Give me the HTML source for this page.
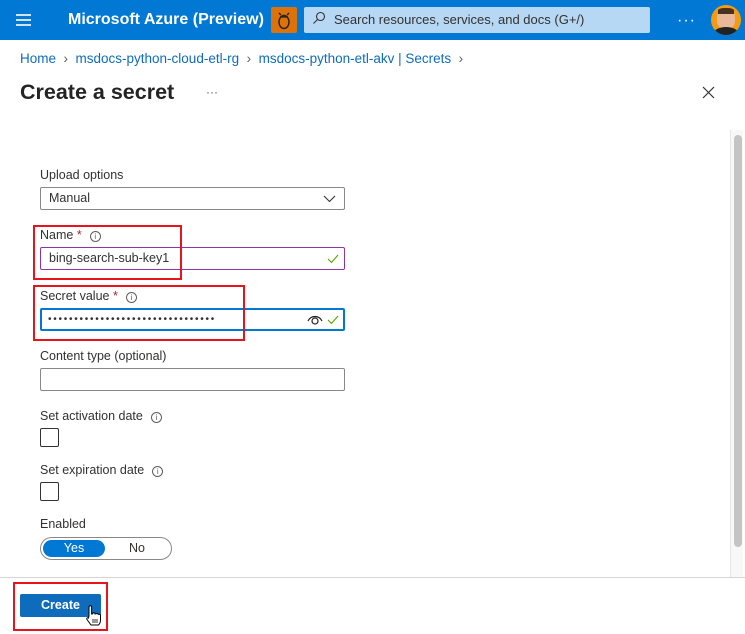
<!DOCTYPE html>
<html><head><style>
*{box-sizing:border-box;margin:0;padding:0}
body{width:745px;height:634px;overflow:hidden;background:#fff;font-family:"Liberation Sans",sans-serif;font-size:13px;color:#323130;position:relative}
.abs{position:absolute}
.top{left:0;top:0;width:745px;height:40px;background:#0078d4}
.lbl{position:absolute;left:40px;font-size:12.5px;color:#323130}
.inp{position:absolute;left:40px;width:305px;height:23px;border:1px solid #8a8886;border-radius:2px;font-size:12.5px;padding-left:8px;line-height:21px}
.red{position:absolute;border:2px solid #e8141b}
.info{display:inline-block;width:11px;height:11px;border:1px solid #605e5c;border-radius:50%;font-size:8px;text-align:center;line-height:9px;margin-left:8px;vertical-align:0px;color:#605e5c}
.chk{position:absolute;left:40px;width:19px;height:19px;border:1px solid #323130;border-radius:2px}
</style></head><body>
<div class="abs top"></div>
<div class="abs" style="left:16px;top:14px;width:15px;height:2px;background:#cfe4f7;box-shadow:0 5px 0 #cfe4f7,0 10px 0 #cfe4f7"></div>
<div class="abs" style="left:68px;top:11px;color:#fff;font-size:16px;font-weight:bold">Microsoft Azure (Preview)</div>
<div class="abs" style="left:271px;top:7px;width:26px;height:26px;background:#dd7209;border-radius:2px"><svg width="26" height="26"><ellipse cx="13" cy="15" rx="5" ry="6.5" fill="none" stroke="#222" stroke-width="1.4"/><path d="M10 8l-2-2M16 8l2-2M9 10h8" stroke="#222" stroke-width="1.3" fill="none"/></svg></div>
<div class="abs" style="left:304px;top:7px;width:346px;height:26px;background:#b6d8f4;border-radius:2px;color:#323130;font-size:13px;line-height:26px;padding-left:30px">Search resources, services, and docs (G+/)</div>
<svg class="abs" style="left:312px;top:11px" width="14" height="14"><circle cx="8.5" cy="5.5" r="4" fill="none" stroke="#323130" stroke-width="1.1"/><path d="M5.5 8.5L1.5 12.5" stroke="#323130" stroke-width="1.1"/></svg>
<div class="abs" style="left:677px;top:12px;color:#fff;font-size:16px;letter-spacing:1px">···</div>
<div class="abs" style="left:711px;top:5px;width:30px;height:30px;border-radius:50%;background:#f39c12;overflow:hidden"><div style="position:absolute;left:6px;top:4px;width:18px;height:20px;background:#e8b899;border-radius:40%"></div><div style="position:absolute;left:7px;top:3px;width:16px;height:6px;background:#4a3020;border-radius:40% 40% 0 0"></div><div style="position:absolute;left:3px;top:22px;width:24px;height:12px;background:#222;border-radius:50% 50% 0 0"></div></div>
<div class="abs" style="left:20px;top:51px;font-size:13.5px;color:#0f6cbd">Home <span style="color:#605e5c">&nbsp;&#8250;&nbsp;</span> msdocs-python-cloud-etl-rg <span style="color:#605e5c">&nbsp;&#8250;&nbsp;</span> msdocs-python-etl-akv | Secrets <span style="color:#605e5c">&nbsp;&#8250;</span></div>
<div class="abs" style="left:20px;top:80px;font-size:21.5px;color:#242424;font-weight:600">Create a secret</div>
<div class="abs" style="left:206px;top:85px;font-size:12px;color:#605e5c">···</div>
<svg class="abs" style="left:702px;top:86px" width="13" height="13"><path d="M1 1l11 11M12 1L1 12" stroke="#323130" stroke-width="1.2"/></svg>

<div class="lbl" style="top:168px">Upload options</div>
<div class="inp" style="top:187px">Manual<svg class="abs" style="right:8px;top:7px" width="13" height="8"><path d="M1 1l5.5 5.5L12 1" fill="none" stroke="#323130" stroke-width="1.1"/></svg></div>

<div class="lbl" style="top:228px">Name <span style="color:#a4262c">*</span><span class="info">i</span></div>
<div class="inp" style="top:247px;border-color:#8c34a8">bing-search-sub-key1<svg class="abs" style="right:5px;top:6px" width="12" height="10"><path d="M1 5l3.5 3.5L11 1" fill="none" stroke="#57a300" stroke-width="1.1"/></svg></div>

<div class="lbl" style="top:289px">Secret value <span style="color:#a4262c">*</span><span class="info">i</span></div>
<div class="inp" style="top:308px;border:2px solid #0078d4;padding-left:6px;line-height:19px;font-size:10px;letter-spacing:1.75px">&#8226;&#8226;&#8226;&#8226;&#8226;&#8226;&#8226;&#8226;&#8226;&#8226;&#8226;&#8226;&#8226;&#8226;&#8226;&#8226;&#8226;&#8226;&#8226;&#8226;&#8226;&#8226;&#8226;&#8226;&#8226;&#8226;&#8226;&#8226;&#8226;&#8226;&#8226;&#8226;<svg class="abs" style="right:20px;top:4px" width="16" height="12"><path d="M1 7C4 1 12 1 15 7" fill="none" stroke="#222" stroke-width="1.2"/><circle cx="8" cy="7" r="3" fill="none" stroke="#222" stroke-width="1.2"/></svg><svg class="abs" style="right:4px;top:5px" width="12" height="10"><path d="M1 5l3.5 3.5L11 1" fill="none" stroke="#57a300" stroke-width="1.1"/></svg></div>

<div class="lbl" style="top:349px">Content type (optional)</div>
<div class="inp" style="top:368px"></div>

<div class="lbl" style="top:409px">Set activation date<span class="info">i</span></div>
<div class="chk" style="top:428px"></div>
<div class="lbl" style="top:463px">Set expiration date<span class="info">i</span></div>
<div class="chk" style="top:482px"></div>
<div class="lbl" style="top:517px">Enabled</div>
<div class="abs" style="left:40px;top:537px;width:132px;height:23px;border:1px solid #8a8886;border-radius:12px"></div>
<div class="abs" style="left:43px;top:540px;width:62px;height:17px;background:#0078d4;border-radius:9px;color:#fff;text-align:center;font-size:12.5px;line-height:17px">Yes</div>
<div class="abs" style="left:129px;top:541px;font-size:12.5px">No</div>

<div class="abs" style="left:730px;top:130px;width:13px;height:447px;background:#f8f8f8;border-left:1px solid #e6e6e6"></div>
<div class="abs" style="left:734px;top:135px;width:8px;height:412px;background:#c4c4c4;border-radius:4px"></div>
<div class="abs" style="left:0;top:577px;width:745px;height:1px;background:#d6d6d6"></div>
<div class="abs" style="left:20px;top:594px;width:81px;height:23px;background:#0f6cbd;border-radius:2px;color:#fff;font-weight:bold;font-size:12.5px;text-align:center;line-height:23px">Create</div>
<svg class="abs" style="left:85px;top:604px" width="16" height="22"><path d="M4 12V3a1.3 1.3 0 0 1 2.6 0v7l1-.2a1.2 1.2 0 0 1 2.4.2l1-.1a1.2 1.2 0 0 1 2.2.5l.6 0a1.2 1.2 0 0 1 1.7 1V16c0 2-1 4-2 5H6l-4-5.5c-.8-1 .3-2.3 1.3-1.4z" fill="#fff" stroke="#000" stroke-width="1"/><path d="M8 15v4M10 15v4M12 15v4" stroke="#000" stroke-width=".8"/></svg>

<div class="red" style="left:33px;top:225px;width:149px;height:55px"></div>
<div class="red" style="left:33px;top:285px;width:212px;height:56px"></div>
<div class="red" style="left:13px;top:582px;width:95px;height:49px"></div>
</body></html>
